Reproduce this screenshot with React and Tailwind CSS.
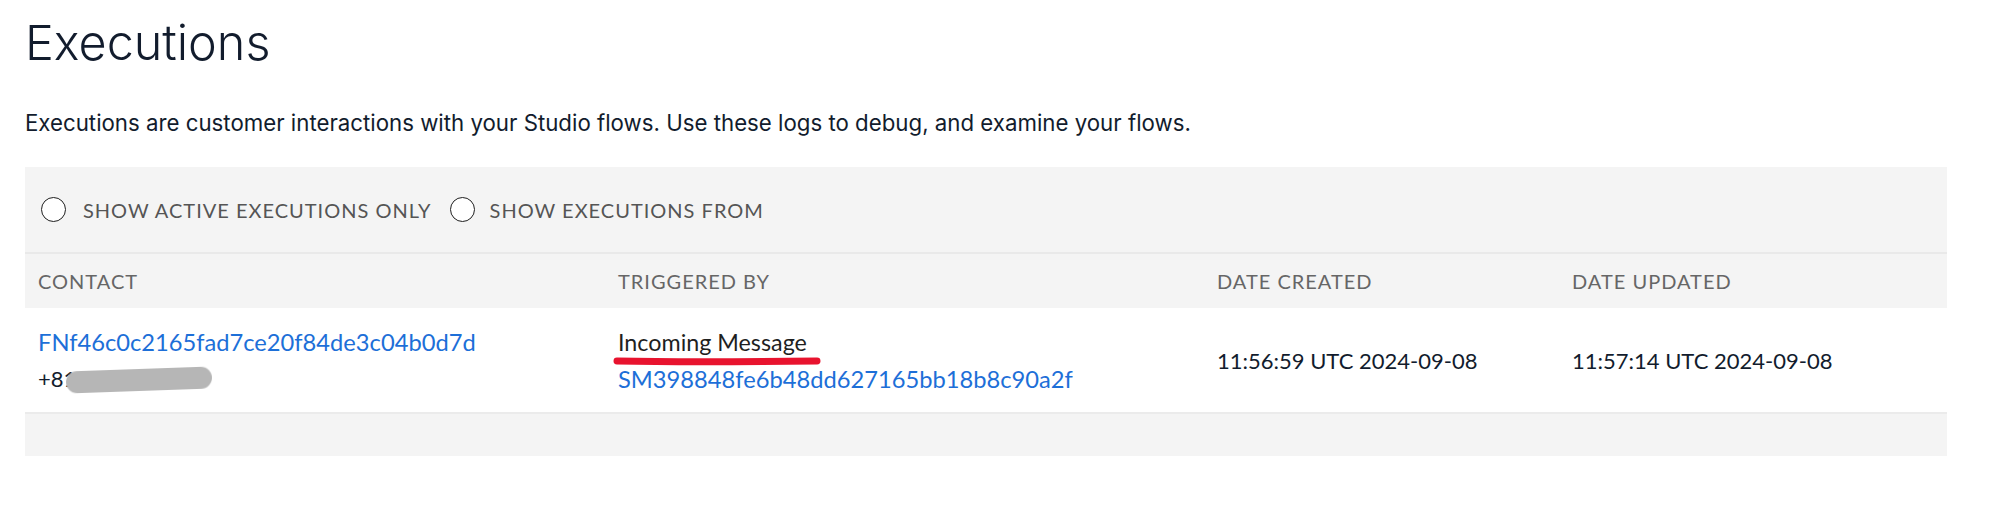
import React from "react";

function Radio() {
  return <span className="block w-[25px] h-[25px] rounded-full border-[1.5px] border-[#1f1f1f] bg-white shrink-0" />;
}

export default function App() {
  return (
    <div className="w-[2000px] h-[526px] bg-white pl-[25px] pt-[19px] overflow-hidden">
      <h1 className="font-['Inter',sans-serif] font-light text-[48.5px] leading-[48px] text-[#121c2d]">Executions</h1>
      <p className="mt-[45px] font-['Inter',sans-serif] text-[22.25px] leading-[22px] text-[#121c2d]">
        Executions are customer interactions with your Studio flows. Use these logs to debug, and examine your flows.
      </p>
      <div className="mt-[33px] w-[1922px] bg-[#f4f4f4] font-['Lato',sans-serif]">
        <div className="h-[87px] flex items-center pl-[16px] border-b-2 border-[#e9e9e9] text-[20px] tracking-[1px] text-[#555]">
          <label className="flex items-center gap-[17px]">
            <Radio />
            <span>SHOW ACTIVE EXECUTIONS ONLY</span>
          </label>
          <label className="flex items-center gap-[15px] ml-[18px]">
            <Radio />
            <span>SHOW EXECUTIONS FROM</span>
          </label>
        </div>
        <div className="h-[54px] grid grid-cols-[580px_599px_355px_1fr] items-center text-[20px] tracking-[1px] text-[#666]">
          <div className="pl-[13px]">CONTACT</div>
          <div className="pl-[13px]">TRIGGERED BY</div>
          <div className="pl-[13px]">DATE CREATED</div>
          <div className="pl-[13px]">DATE UPDATED</div>
        </div>
        <div className="h-[106px] bg-white border-b-2 border-[#ebebeb] grid grid-cols-[580px_599px_355px_1fr] items-center text-[22px] text-[#121c2d]">
          <div className="pl-[13px] flex flex-col gap-[15px] leading-[22px]">
            <span className="text-[#1d6fd8] text-[23.7px]">FNf46c0c2165fad7ce20f84de3c04b0d7d</span>
            <span className="relative text-[22px]">
              +81
              <span className="absolute left-[28px] top-[1px] w-[146px] h-[22px] rounded-full bg-[#b6b6b6] blur-[0.6px] -rotate-2" />
            </span>
          </div>
          <div className="pl-[13px] flex flex-col gap-[15px] leading-[22px] relative">
            <span className="text-[#1f1f1f] text-[23.3px]">Incoming Message</span>
            <span className="text-[#1d6fd8] text-[23.7px]">SM398848fe6b48dd627165bb18b8c90a2f</span>
            <svg className="absolute left-[8px] top-[24px]" width="210" height="12" viewBox="0 0 210 12">
              <path d="M4 6 C 50 7, 120 7, 204 6" stroke="#e8132e" strokeWidth="7" strokeLinecap="round" fill="none" />
            </svg>
          </div>
          <div className="pl-[13px]">11:56:59 UTC 2024-09-08</div>
          <div className="pl-[13px]">11:57:14 UTC 2024-09-08</div>
        </div>
        <div className="h-[42px]" />
      </div>
    </div>
  );
}
